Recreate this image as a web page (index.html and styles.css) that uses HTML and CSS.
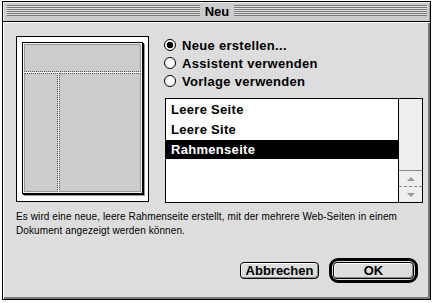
FILE: index.html
```html
<!DOCTYPE html>
<html lang="de">
<head>
  <meta charset="UTF-8">
  <title>Neu</title>
  <link rel="stylesheet" href="styles.css">
</head>
<body>

<div class="window">
  <!-- Title bar -->
  <div class="titlebar">
    <span class="stripes"></span>
    <span class="title">Neu</span>
    <span class="stripes"></span>
  </div>

  <div class="content">
    <div class="top">
      <!-- Preview of the frame page -->
      <div class="preview">
        <div class="page">
          <div class="pane pane-top"></div>
          <div class="pane-row">
            <div class="pane pane-left"></div>
            <div class="pane pane-main"></div>
          </div>
        </div>
      </div>

      <div class="side">
        <ul class="radios">
          <li><span class="radio on"></span>Neue erstellen...</li>
          <li><span class="radio"></span>Assistent verwenden</li>
          <li><span class="radio"></span>Vorlage verwenden</li>
        </ul>

        <div class="listbox">
          <ul class="items">
            <li>Leere Seite</li>
            <li>Leere Site</li>
            <li class="selected">Rahmenseite</li>
          </ul>
          <div class="scrollbar">
            <div class="arrow"><span class="tri up"></span></div>
            <div class="arrow dashed"><span class="tri down"></span></div>
          </div>
        </div>
      </div>
    </div>

    <p class="desc">Es wird eine neue, leere Rahmenseite erstellt, mit der mehrere Web-Seiten in einem<br>Dokument angezeigt werden können.</p>

    <div class="buttons">
      <button class="btn cancel">Abbrechen</button>
      <div class="default-ring"><button class="btn ok">OK</button></div>
    </div>
  </div>
</div>

</body>
</html>
```

FILE: styles.css
```css
body {
  margin: 0;
  background-color: #fff;
  font-family: 'Liberation Sans', Arial, sans-serif;
  color: #000;
}
.window {
  margin: 1px 0 0 2px;
  width: 429px;
  height: 299px;
  box-sizing: border-box;
  border: 1px solid #000;
  background-color: #ddd;
  display: flex;
  flex-direction: column;
}
.titlebar {
  height: 20px;
  box-sizing: border-box;
  border-bottom: 1px solid #000;
  background-color: #ccc;
  box-shadow: inset 1px 1px #eee, inset -1px 0 #999;
  display: flex;
  align-items: flex-start;
  padding: 0 3px 0 4px;
}
.stripes {
  flex: 1;
  height: 11px;
  margin-top: 3px;
  background: repeating-linear-gradient(#777 0 1px, #e4e4e4 1px 2px);
}
.title {
  font-weight: bold;
  font-size: 13px;
  line-height: 19px;
  padding: 0 5px;
}
.content {
  flex: 1;
  display: flex;
  flex-direction: column;
  padding: 14px 12px 16px 13px;
  box-shadow: inset 1px 1px #fff, inset -2px -2px #777;
}
.top {
  display: flex;
  gap: 15px;
}
/* Preview */
.preview {
  width: 135px;
  height: 166px;
  box-sizing: border-box;
  border: 1px solid #000;
  background-color: #fff;
  padding: 5px;
}
.page {
  width: 121px;
  height: 152px;
  box-sizing: border-box;
  border: 1px solid #000;
  box-shadow: 1px 1px 0 #000, 2px 2px 0 #999;
  background-color: #f2f2f2;
  padding: 1px;
  display: flex;
  flex-direction: column;
  gap: 1px;
}
.pane {
  background-color: #ccc;
  border: 1px solid #999;
  box-sizing: border-box;
}
.pane-top {
  height: 28px;
  border-bottom: 1px dotted #555;
}
.pane-row {
  flex: 1;
  display: flex;
  gap: 1px;
}
.pane-left {
  width: 34px;
  border-top: 1px dotted #555;
  border-right: 1px dotted #555;
}
.pane-main {
  flex: 1;
  border-top: 1px dotted #555;
  border-left: 1px dotted #555;
}
/* Options */
.side {
  flex: 1;
  display: flex;
  flex-direction: column;
}
.radios {
  list-style: none;
  margin: 0;
  padding: 0;
}
.radios li {
  height: 18px;
  display: flex;
  align-items: center;
  gap: 6px;
  font-weight: bold;
  font-size: 13px;
  letter-spacing: 0.3px;
}
.radio {
  width: 12px;
  height: 12px;
  box-sizing: border-box;
  border: 1px solid #000;
  border-radius: 50%;
  background-color: #fff;
}
.radio.on {
  background: radial-gradient(circle, #000 0 3px, #fff 3.6px);
}
.listbox {
  margin: 8px 0 0 1px;
  width: 258px;
  height: 105px;
  box-sizing: border-box;
  border: 1px solid #000;
  background-color: #fff;
  display: flex;
}
.items {
  flex: 1;
  list-style: none;
  margin: 0;
  padding: 1px 0 0;
  border-right: 1px solid #000;
}
.items li {
  height: 20px;
  line-height: 20px;
  padding-left: 5px;
  font-weight: bold;
  font-size: 13px;
  letter-spacing: 0.3px;
}
.items li.selected {
  background-color: #000;
  color: #fff;
  height: 19px;
  line-height: 19px;
}
.scrollbar {
  width: 23px;
  background-color: #eee;
  display: flex;
  flex-direction: column;
  justify-content: flex-end;
}
.arrow {
  height: 15px;
  border-top: 1px solid #888;
  display: flex;
  align-items: center;
  justify-content: center;
}
.arrow.dashed {
  border-top: 1px dashed #888;
}
.tri {
  width: 0;
  height: 0;
  border-left: 4px solid transparent;
  border-right: 4px solid transparent;
}
.tri.up {
  border-bottom: 4px solid #999;
}
.tri.down {
  border-top: 4px solid #999;
}
.desc {
  margin: 7px 0 0;
  font-size: 10px;
  letter-spacing: 0.1px;
  line-height: 14px;
}
/* Buttons */
.buttons {
  margin-top: auto;
  display: flex;
  justify-content: flex-end;
  align-items: center;
  gap: 10px;
}
.btn {
  font-family: 'Liberation Sans', Arial, sans-serif;
  font-weight: bold;
  font-size: 13px;
  height: 17px;
  padding: 0;
  border: 1px solid #000;
  border-radius: 4px;
  background-color: #ddd;
  box-shadow: inset 1px 1px #fff, inset -1px -1px #888;
  color: #000;
}
.cancel {
  width: 79px;
}
.default-ring {
  border: 3px solid #000;
  border-radius: 9px;
  padding: 1px;
  display: flex;
}
.ok {
  width: 81px;
}
```
